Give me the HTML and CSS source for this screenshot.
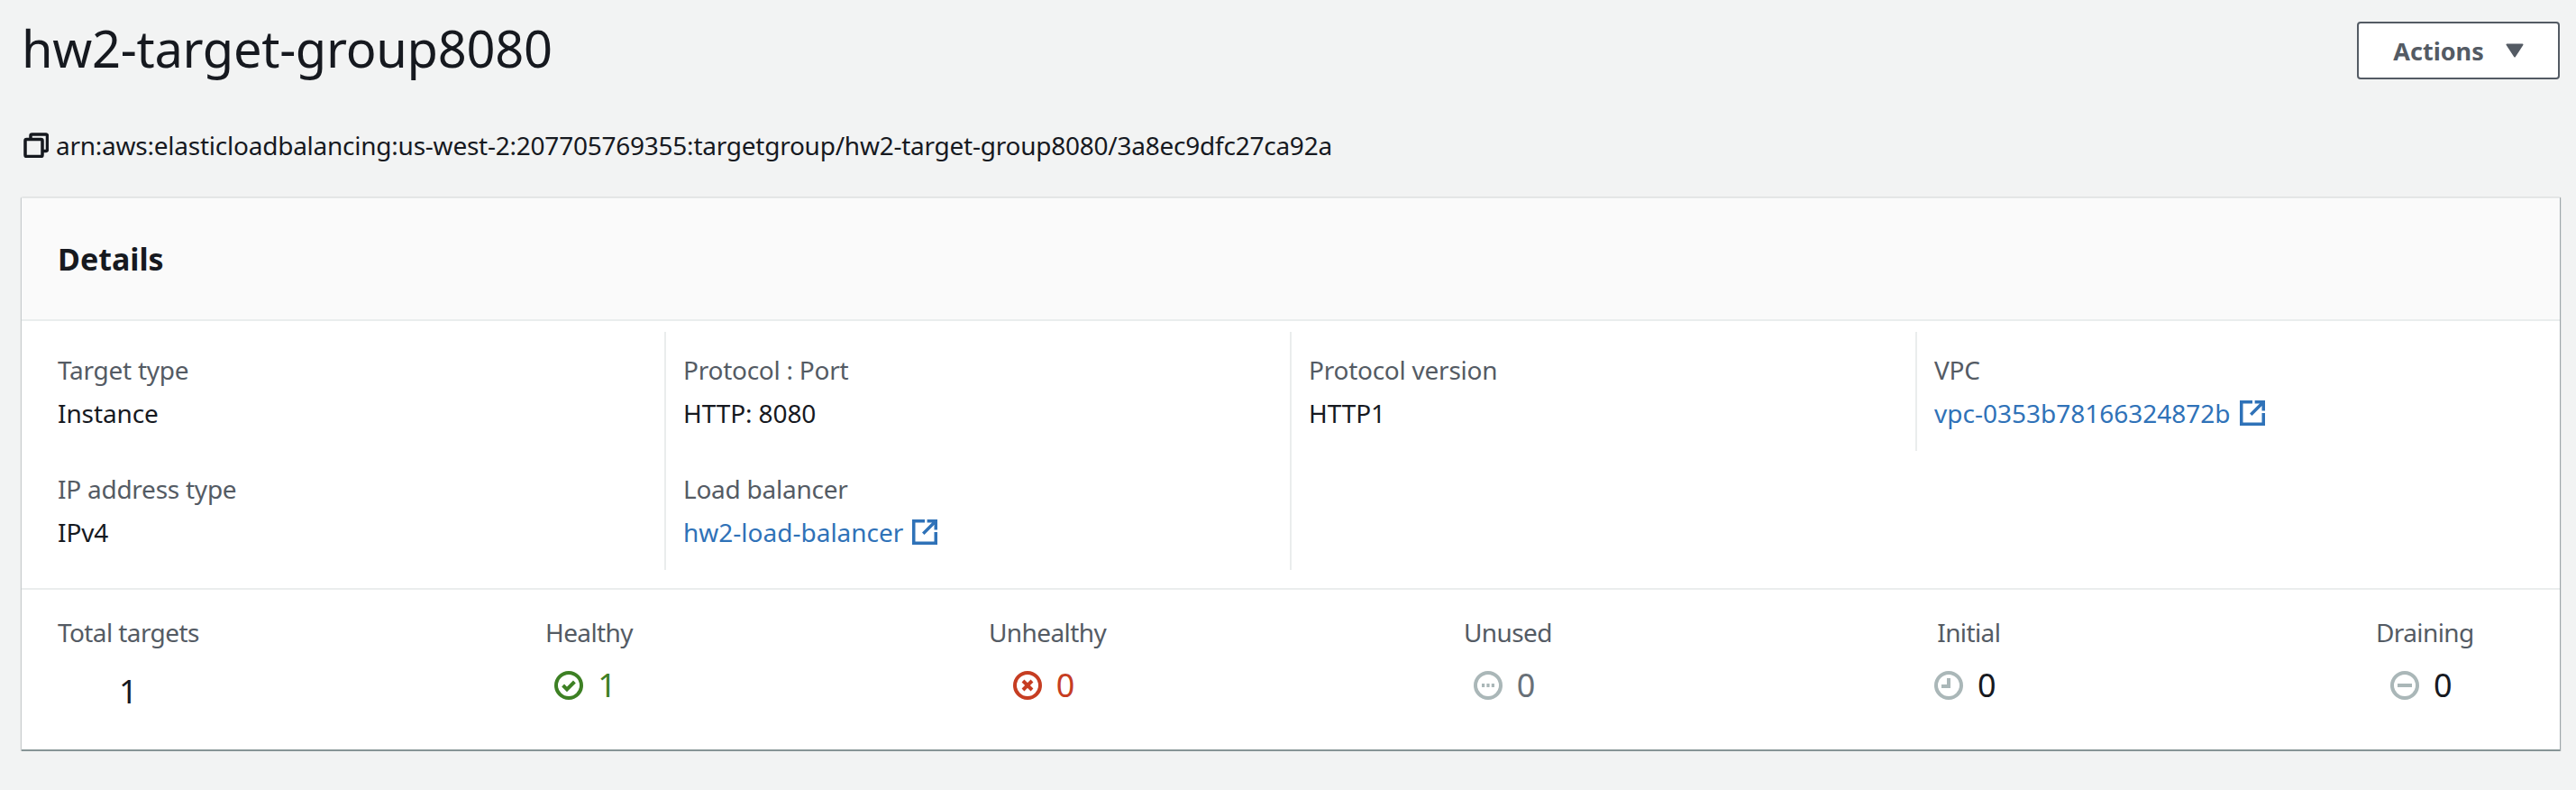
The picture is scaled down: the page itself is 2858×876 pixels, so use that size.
FILE: index.html
```html
<!DOCTYPE html>
<html lang="en">

<head>
  <meta charset="UTF-8">
  <title>hw2-target-group8080</title>
  <link rel="stylesheet" href="styles.css">
</head>

<body>
  <div id="page-head">
    <h1>hw2-target-group8080</h1>
    <button id="actions">Actions
      <svg viewBox="0 0 20 16" width="20" height="16"><path class="solid" d="M1.5 1.5h17L10 14.5z" /></svg>
    </button>
  </div>

  <div id="arn">
    <svg viewBox="0 0 28 28" width="28" height="28">
      <path class="line" d="M8 6V3.500a1.500 1.500 0 0 1 1.500-1.500H25a1.500 1.500 0 0 1 1.500 1.500V19a1.500 1.500 0 0 1-1.500 1.500h-3" />
      <rect class="line" x="2" y="7.500" width="19" height="19" rx="1.500" />
    </svg>
    <span>arn:aws:elasticloadbalancing:us-west-2:207705769355:targetgroup/hw2-target-group8080/3a8ec9dfc27ca92a</span>
  </div>

  <div id="card">
    <div id="card-head">Details</div>

    <div id="details">
      <div class="col">
        <div class="field">
          <div class="label">Target type</div>
          <div class="value">Instance</div>
        </div>
        <div class="field">
          <div class="label">IP address type</div>
          <div class="value">IPv4</div>
        </div>
      </div>
      <div class="col">
        <div class="field">
          <div class="label">Protocol : Port</div>
          <div class="value">HTTP: 8080</div>
        </div>
        <div class="field">
          <div class="label">Load balancer</div>
          <div class="value"><a href="#">hw2-load-balancer
            <svg viewBox="0 0 16 16" width="28" height="28"><path class="link-line" d="M8 1H1v14h14V8M9.500 1H15v5.500M15 1 7 9" /></svg>
          </a></div>
        </div>
      </div>
      <div class="col">
        <div class="field">
          <div class="label">Protocol version</div>
          <div class="value">HTTP1</div>
        </div>
      </div>
      <div class="col short">
        <div class="field">
          <div class="label">VPC</div>
          <div class="value"><a href="#">vpc-0353b78166324872b
            <svg viewBox="0 0 16 16" width="28" height="28"><path class="link-line" d="M8 1H1v14h14V8M9.500 1H15v5.500M15 1 7 9" /></svg>
          </a></div>
        </div>
      </div>
    </div>

    <div id="stats">
      <div class="stat">
        <div class="label">Total targets</div>
        <div class="count total">1</div>
      </div>
      <div class="stat">
        <div class="label">Healthy</div>
        <div class="count green">
          <svg viewBox="0 0 16 16" width="32" height="32"><circle class="ring" cx="8" cy="8" r="7" /><path class="mark" d="M4.800 8l2.200 2.200 4.200-4.200" /></svg>
          1
        </div>
      </div>
      <div class="stat">
        <div class="label">Unhealthy</div>
        <div class="count red">
          <svg viewBox="0 0 16 16" width="32" height="32"><circle class="ring" cx="8" cy="8" r="7" /><path class="mark" d="M5.500 5.500l5 5M10.500 5.500l-5 5" /></svg>
          0
        </div>
      </div>
      <div class="stat">
        <div class="label">Unused</div>
        <div class="count grey">
          <svg viewBox="0 0 16 16" width="32" height="32"><circle class="ring" cx="8" cy="8" r="7" /><path class="solid" d="M4.500 7h1.600v2H4.500zM7.200 7h1.600v2H7.200zM9.900 7h1.600v2H9.900z" /></svg>
          0
        </div>
      </div>
      <div class="stat">
        <div class="label">Initial</div>
        <div class="count muted">
          <svg viewBox="0 0 16 16" width="32" height="32"><circle class="ring" cx="8" cy="8" r="7" /><path class="solid" d="M7 4h2v5.500H4v-2h3z" /></svg>
          0
        </div>
      </div>
      <div class="stat">
        <div class="label">Draining</div>
        <div class="count muted">
          <svg viewBox="0 0 16 16" width="32" height="32"><circle class="ring" cx="8" cy="8" r="7" /><path class="solid" d="M4 7h8v2H4z" /></svg>
          0
        </div>
      </div>
    </div>
  </div>
</body>

</html>
```

FILE: styles.css
```css
body {
  margin: 0;
  padding: 0 18px 0 24px;
  background-color: #f2f3f3;
  color: #16191f;
  font-family: "Noto Sans", "Open Sans", sans-serif;
  font-size: 28px;
  line-height: 40px;
}

#page-head {
  display: flex;
  justify-content: space-between;
  align-items: flex-start;
  padding-top: 24px;
  height: 104px;
  box-sizing: border-box;
}

h1 {
  margin: 0;
  font-size: 56px;
  font-weight: 400;
  line-height: 58px;
  letter-spacing: -0.3px;
}

#actions {
  display: flex;
  align-items: center;
  justify-content: center;
  gap: 24px;
  width: 225px;
  height: 64px;
  padding: 0;
  background-color: #fff;
  border: 2px solid #545b64;
  border-radius: 4px;
  color: #545b64;
  font-family: inherit;
  font-size: 27px;
  font-weight: 700;
}

#arn {
  display: flex;
  align-items: center;
  gap: 8px;
  height: 115px;
  padding: 0 0 2px 2px;
  box-sizing: border-box;
  letter-spacing: -0.24px;
}

.line {
  fill: none;
  stroke: #16191f;
  stroke-width: 3.500;
}

.link-line {
  fill: none;
  stroke: #2f72b8;
  stroke-width: 2;
}

#card {
  background-color: #fff;
  border-top: 1px solid #eaeded;
  border-bottom: 2px solid #879596;
  box-shadow: 1px 0 1px 0 rgba(0, 28, 36, 0.3), -1px 0 1px 0 rgba(0, 28, 36, 0.12), 0 1px 2px 0 rgba(0, 28, 36, 0.2);
}

#card-head {
  height: 136px;
  box-sizing: border-box;
  padding: 0 40px;
  display: flex;
  align-items: center;
  background-color: #fafafa;
  border-bottom: 2px solid #eaeded;
  font-size: 34px;
  font-weight: 700;
}

#details {
  display: grid;
  grid-template-columns: 713px 694px 694px 1fr;
  padding: 12px 0 20px;
  border-bottom: 2px solid #eaeded;
  height: 298px;
  box-sizing: border-box;
}

.col {
  padding-left: 19px;
  border-left: 2px solid #eaeded;
}

.col:first-child {
  padding-left: 40px;
  border-left: none;
}

.col.short {
  height: 132px;
}

.field {
  height: 132px;
  padding-top: 22px;
  box-sizing: border-box;
}

.label {
  color: #545b64;
  letter-spacing: -0.25px;
  margin-bottom: 8px;
}

.value {
  letter-spacing: -0.1px;
}

a {
  display: inline-flex;
  align-items: center;
  gap: 10px;
  color: #2f72b8;
  text-decoration: none;
  letter-spacing: 0;
}

#stats {
  display: grid;
  grid-template-columns: 541px 492px 527px 522px 490px auto;
  justify-content: start;
  justify-items: start;
  padding: 27px 0 0 40px;
  height: 177px;
  box-sizing: border-box;
}

.stat {
  text-align: center;
}

.stat .label {
  letter-spacing: -0.6px;
}

.count {
  display: flex;
  align-items: center;
  justify-content: center;
  gap: 16px;
  padding-right: 8px;
  font-size: 36px;
  line-height: 44px;
  margin-top: 17px;
}

.count.total {
  padding-right: 0;
  margin-top: 24px;
}

.ring {
  fill: none;
  stroke-width: 2;
}

.mark {
  fill: none;
  stroke-width: 2;
}

.solid {
  fill: #aab7b8;
}

#actions .solid {
  fill: #545b64;
  stroke: #545b64;
  stroke-width: 2;
  stroke-linejoin: round;
}

.count .ring {
  stroke: #aab7b8;
}

.green {
  color: #3d8024;
}

.green .ring,
.green .mark {
  stroke: #3d8024;
}

.red {
  color: #c63d22;
}

.red .ring,
.red .mark {
  stroke: #c63d22;
}

.grey {
  color: #687078;
}
```
